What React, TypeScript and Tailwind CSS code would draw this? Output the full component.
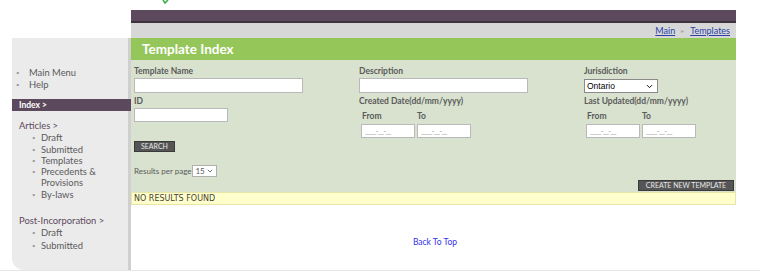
import { ChevronDown } from "lucide-react";

const font = { fontFamily: 'Lato, "Open Sans", sans-serif' };

const articles = ["Draft", "Submitted", "Templates", "Precedents &", "Provisions", "By-laws"];
const postInc = ["Draft", "Submitted"];

const Label = ({ children }: { children: React.ReactNode }) => (
  <div className="text-[8.5px] font-bold text-[#5a5a5a] leading-[12px]">{children}</div>
);

const Bullet = ({ w, hide }: { w: string; hide?: boolean }) => (
  <span className={`${w} text-[6px] text-[#999] flex items-center`}>{hide ? "" : "•"}</span>
);

const DateBox = () => (
  <div className="w-[54px] h-[14px] bg-white border border-[#b9b9b9] text-[7px] text-[#9a9a9a] leading-[12px] pl-[3px] tracking-[-0.5px]">
    ____-__-__
  </div>
);

const DateRange = () => (
  <div className="pl-[2px] pt-[3px]">
    <div className="flex text-[8.5px] font-bold text-[#5a5a5a] leading-[12px]">
      <span className="w-[56px] pl-[1px]">From</span>
      <span>To</span>
    </div>
    <div className="flex gap-[2px] mt-[2px]">
      <DateBox />
      <DateBox />
    </div>
  </div>
);

const Sidebar = () => (
  <div className="w-[119px] h-[232px] bg-[#ebebeb] border-r-[3px] border-[#cfcfcf] rounded-bl-[12px] pt-[29px] text-[9.4px] text-[#5a5a5a] leading-[11.3px]">
    <ul className="pl-[4px] leading-[12px]">
      <li className="flex"><Bullet w="w-[13px]" />Main Menu</li>
      <li className="flex"><Bullet w="w-[13px]" />Help</li>
    </ul>
    <div className="mt-[8px] h-[12px] bg-[#5d495d] text-white font-bold text-[8.5px] leading-[12px] pl-[7px] mr-[-3px]">
      Index &gt;
    </div>
    <div className="mt-[9px] pl-[7px] text-[#5d495d]">Articles &gt;</div>
    <ul className="pl-[20px] mt-[1px]">
      {articles.map((a) => (
        <li key={a} className="flex">
          <Bullet w="w-[9px]" hide={a === "Provisions"} />
          {a}
        </li>
      ))}
    </ul>
    <div className="mt-[15px] pl-[7px] text-[#5d495d]">Post-Incorporation &gt;</div>
    <ul className="pl-[20px] mt-[1px] leading-[12.5px]">
      {postInc.map((a) => (
        <li key={a} className="flex">
          <Bullet w="w-[9px]" />
          {a}
        </li>
      ))}
    </ul>
  </div>
);

export default function App() {
  return (
    <div className="w-[760px] h-[277px] bg-white overflow-hidden relative" style={font}>
      <svg className="absolute left-[161px] top-0" width="10" height="5" viewBox="0 0 10 5">
        <path d="M2 0 L4 3 L7 0" stroke="#3cae4a" strokeWidth="1.6" fill="none" />
      </svg>
      <div className="flex pl-[12px]">
        <div className="pt-[38px]">
          <Sidebar />
        </div>
        <div className="w-[605px] pt-[10px]">
          <div className="h-[13px] bg-[#5d495d] border-b-2 border-[#3f323f]" />
          <div className="h-[15px] bg-[#d7d7d7] flex items-center justify-end pr-[6px] text-[9px]">
            <a className="text-[#2a3fa6] underline">Main</a>
            <span className="text-[#aaa] text-[6px] mx-[6px]">▸</span>
            <a className="text-[#2a3fa6] underline">Templates</a>
          </div>
          <div className="h-[22px] bg-[#95c65a] text-white font-bold text-[13.5px] leading-[22px] pl-[11px]">
            Template Index
          </div>
          <div className="h-[132px] bg-[#d8e2cf] pt-[5px] pl-[3px] relative">
            <div className="grid grid-cols-[225px_225px_225px]">
              <div>
                <Label>Template Name</Label>
                <div className="w-[169px] h-[15px] bg-white border border-[#b9b9b9] mt-[1px]" />
                <div className="mt-[2px]"><Label>ID</Label></div>
                <div className="w-[94px] h-[14px] bg-white border border-[#b9b9b9] mt-[1px]" />
                <button className="mt-[19px] h-[11px] w-[41px] bg-[#555555] border border-[#3a3a3a] text-[#e8e8e8] text-[7px] leading-[9px] block">
                  SEARCH
                </button>
              </div>
              <div>
                <Label>Description</Label>
                <div className="w-[169px] h-[15px] bg-white border border-[#b9b9b9] mt-[1px]" />
                <div className="mt-[2px]"><Label>Created Date(dd/mm/yyyy)</Label></div>
                <DateRange />
              </div>
              <div>
                <Label>Jurisdiction</Label>
                <div className="w-[74px] h-[14px] bg-white border border-[#8a8a8a] mt-[2px] flex items-center justify-between pl-[2px] pr-[3px] text-[8.5px] text-black">
                  <span style={{ fontFamily: '"Liberation Sans", Arial, sans-serif' }}>Ontario</span>
                  <ChevronDown size={9} strokeWidth={2.5} />
                </div>
                <div className="mt-[2px]"><Label>Last Updated(dd/mm/yyyy)</Label></div>
                <DateRange />
              </div>
            </div>
            <div className="flex items-center mt-[13px] text-[8px] text-[#5a5a5a]">
              <span>Results per page</span>
              <div className="ml-[1px] w-[25px] h-[12px] bg-white border border-[#b0b0b0] flex items-center justify-between px-[2px] text-[8px]">
                <span>15</span>
                <ChevronDown size={8} strokeWidth={2.5} />
              </div>
            </div>
            <div className="flex justify-end pr-[2px] mt-[3px]">
              <button className="h-[11px] w-[96px] bg-[#555555] border border-[#3a3a3a] text-[#e8e8e8] text-[7px] leading-[9px]">
                CREATE NEW TEMPLATE
              </button>
            </div>
          </div>
          <div
            className="h-[13px] bg-[#ffffcc] border border-[#e6e6a8] text-[8px] text-[#4a3f36] leading-[11px] pl-[2px]"
            style={{ fontFamily: '"DejaVu Sans", Verdana, sans-serif' }}
          >
            NO RESULTS FOUND
          </div>
          <div className="text-center pt-[31px] pl-[3px] text-[8.5px] text-[#3333ee]">Back To Top</div>
        </div>
      </div>
      <div className="absolute left-0 right-0 top-[270px] h-[1px] bg-[#e6e6e6]" />
    </div>
  );
}
